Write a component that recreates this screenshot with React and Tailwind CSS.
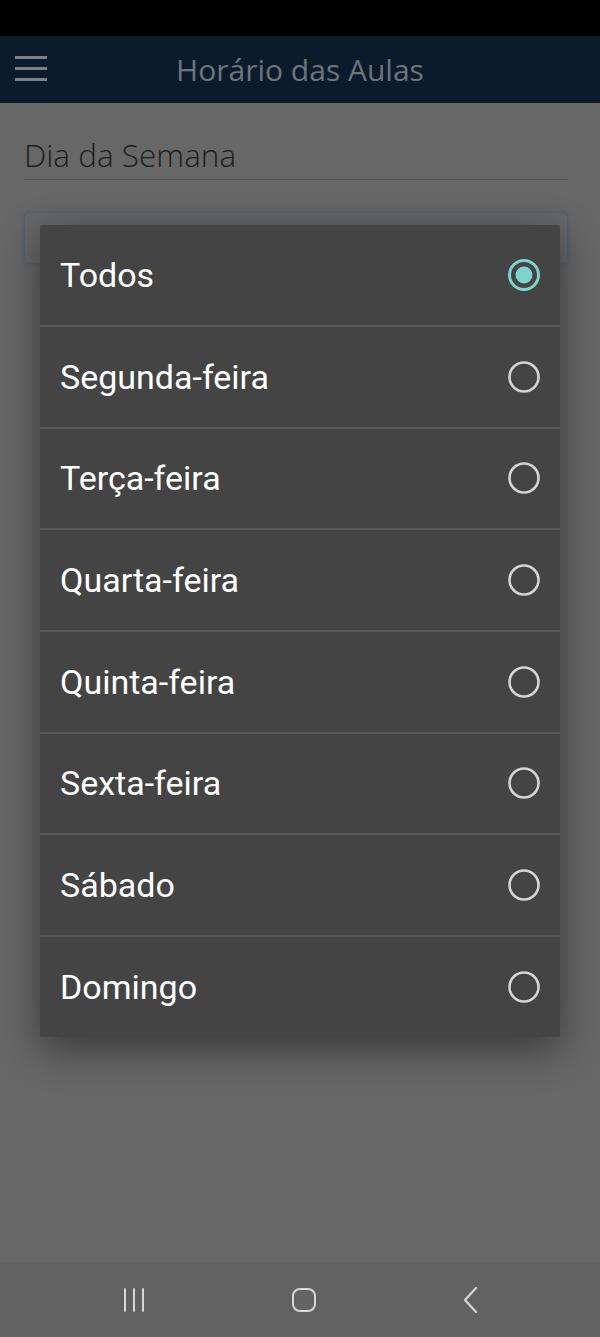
import React from "react";

const days = ["Todos", "Segunda-feira", "Terça-feira", "Quarta-feira", "Quinta-feira", "Sexta-feira", "Sábado", "Domingo"];

function Radio({ checked }) {
  return checked ? (
    <svg width="34" height="34" viewBox="0 0 34 34">
      <circle cx="17" cy="17" r="14.5" fill="none" stroke="#7fd3cb" strokeWidth="3" />
      <circle cx="17" cy="17" r="8.5" fill="#7fd3cb" />
    </svg>
  ) : (
    <svg width="34" height="34" viewBox="0 0 34 34">
      <circle cx="17" cy="17" r="14.5" fill="none" stroke="#d4d4d4" strokeWidth="2.6" />
    </svg>
  );
}

export default function App() {
  return (
    <div className="relative w-[600px] h-[1337px] bg-[#676767] flex flex-col overflow-hidden" style={{ fontFamily: "'Open Sans', sans-serif" }}>
      <div className="h-[36px] bg-black shrink-0" />
      <div className="h-[67px] bg-[#0b1b2b] shrink-0 flex items-center relative">
        <div className="absolute left-[15px] top-[20px] flex flex-col gap-[8px]">
          <div className="w-[32px] h-[3px] bg-[#7b8088]" />
          <div className="w-[32px] h-[3px] bg-[#7b8088]" />
          <div className="w-[32px] h-[3px] bg-[#7b8088]" />
        </div>
        <div className="flex-1 text-center text-[30px] text-[#6c747c] leading-none">Horário das Aulas</div>
      </div>
      <div className="flex-1 pl-[24px] pr-[32px] pt-[36px]">
        <div className="text-[31.5px] text-[#1e1e1e] leading-none pb-[8px] border-b border-[#545454]" style={{ fontWeight: 300 }}>Dia da Semana</div>
        <div className="mt-[32px] h-[52px] rounded-[5px] border border-[#55626e] shadow-[0_0_4px_rgba(60,90,120,0.5)]" />
      </div>
      <div className="h-[75px] bg-[#626262] shrink-0 flex items-center pl-[122px]">
        <svg width="26" height="26" viewBox="0 0 26 26">
          <path d="M3 2v22M12 2v22M21 2v22" stroke="#d7d7d7" strokeWidth="2" strokeLinecap="round" />
        </svg>
        <svg width="26" height="26" viewBox="0 0 26 26" className="ml-[143px]">
          <rect x="2" y="2" width="22" height="22" rx="7" fill="none" stroke="#d7d7d7" strokeWidth="2" />
        </svg>
        <svg width="20" height="28" viewBox="0 0 20 28" className="ml-[144px]">
          <path d="M15 2L4 14L15 26" fill="none" stroke="#d7d7d7" strokeWidth="2.2" strokeLinecap="round" strokeLinejoin="round" />
        </svg>
      </div>
      <div className="absolute left-[40px] top-[225px] w-[520px] bg-[#444444] rounded-[2px] shadow-[0_12px_40px_rgba(0,0,0,0.45)] flex flex-col" style={{ fontFamily: "Roboto, sans-serif" }}>
        {days.map((d, i) => (
          <div key={d} className={`flex items-center justify-between pl-[20px] pr-[19px] ${i === 0 ? "h-[100px]" : "h-[101.67px] border-t-2 border-[#5a5a5a]"}`}>
            <span className="text-[34px] text-white leading-none">{d}</span>
            <Radio checked={i === 0} />
          </div>
        ))}
      </div>
    </div>
  );
}
